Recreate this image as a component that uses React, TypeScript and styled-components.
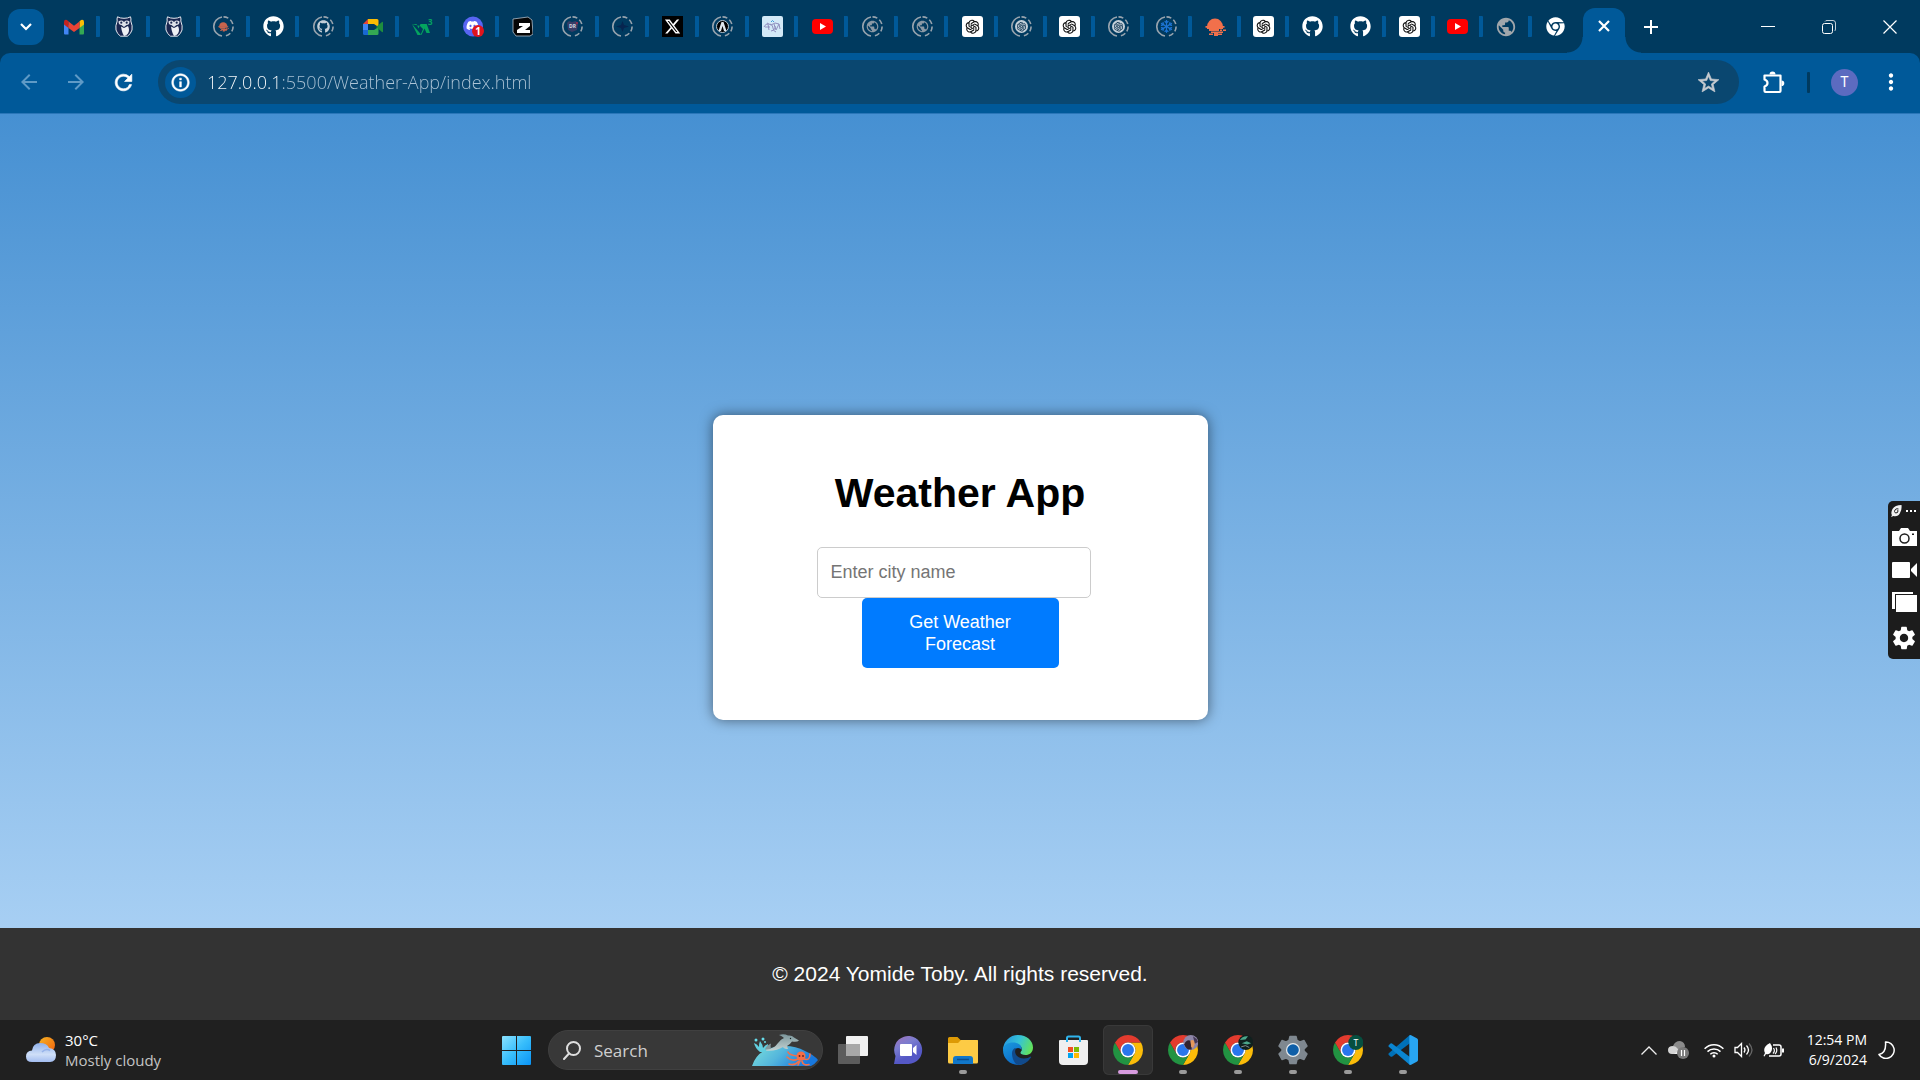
import React from "react";
import styled, { createGlobalStyle, css } from "styled-components";
import {
  MdArrowBack,
  MdArrowForward,
  MdRefresh,
  MdInfoOutline,
  MdStarBorder,
  MdPublic,
  MdSettings,
  MdMoreVert,
} from "react-icons/md";
import { FaGithub, FaChrome, FaDiscord, FaRegSnowflake } from "react-icons/fa";
import { FaXTwitter } from "react-icons/fa6";
import { AiOutlineOpenAI } from "react-icons/ai";

const systemFont = `"Open Sans", "Noto Sans", sans-serif`;
const pageFont = `"Liberation Sans", Arial, sans-serif`;
const frame = "#003a5f";
const accent = "#005999";

const GlobalStyle = createGlobalStyle`
  *, *::before, *::after { box-sizing: border-box; }
  body { margin: 0; font-family: ${systemFont}; background: #202020; }
  button { border: 0; padding: 0; background: none; font: inherit; color: inherit; cursor: pointer; }
  svg { display: block; flex: none; }
`;

const Screen = styled.div`
  display: flex;
  flex-direction: column;
  min-height: 100vh;
  overflow: hidden;
`;

/* ---------- Tab strip ---------- */

const TabStrip = styled.header`
  display: flex;
  align-items: center;
  height: 53px;
  padding-left: 8px;
  background: ${frame};
  color: #fff;
`;

const TabSearch = styled.button`
  display: grid;
  place-items: center;
  width: 36px;
  height: 36px;
  margin-right: 6px;
  border-radius: 12px;
  background: ${accent};
`;

const TabGroup = styled.nav<{ $count: number; $width: number }>`
  display: grid;
  grid-template-columns: repeat(${(p) => p.$count}, 1fr);
  flex: 0 1 ${(p) => p.$width}px;
`;

const Tab = styled.button<{ $divided: boolean }>`
  display: grid;
  place-items: center;
  height: 21px;
  ${(p) =>
    p.$divided &&
    css`
      border-right: 4px solid ${accent};
      border-radius: 0 1px 1px 0;
      padding-left: 2px;
    `}
`;

const ActiveTab = styled.div`
  display: grid;
  place-items: center;
  position: relative;
  align-self: flex-end;
  width: 42px;
  height: 45px;
  margin-left: 3px;
  padding-bottom: 9px;
  border-radius: 12px 12px 0 0;
  background: ${accent};
  &::before,
  &::after {
    content: "";
    position: absolute;
    bottom: 0;
    width: 16px;
    height: 16px;
  }
  &::before {
    right: 100%;
    background: radial-gradient(circle at 0 0, transparent 15px, ${accent} 16px);
  }
  &::after {
    left: 100%;
    background: radial-gradient(circle at 100% 0, transparent 15px, ${accent} 16px);
  }
`;

const NewTab = styled.button`
  margin-left: 16px;
  padding: 3px;
`;

const WindowControls = styled.div`
  display: flex;
  margin-left: auto;
`;

const WindowButton = styled.button`
  display: grid;
  place-items: center;
  width: 61px;
  height: 53px;
`;

/* ---------- Toolbar ---------- */

const ToolbarBack = styled.div`
  background: ${frame};
`;

const Toolbar = styled.div`
  display: flex;
  align-items: center;
  height: 61px;
  padding: 0 16px 2px 17px;
  border-bottom: 1px solid #2a76b8;
  border-radius: 10px 10px 0 0;
  background: ${accent};
  color: #fff;
`;

const boldGlyph = css`
  path:not([fill="none"]) {
    stroke: currentColor;
    stroke-width: 0.6px;
  }
`;

const ToolButton = styled.button<{ $dim?: boolean }>`
  display: grid;
  place-items: center;
  width: 24px;
  height: 24px;
  margin-right: 23px;
  color: ${(p) => (p.$dim ? "#5f9ac6" : "#fff")};
  ${(p) => !p.$dim && boldGlyph}
`;

const AddressBar = styled.form`
  display: flex;
  align-items: center;
  flex: 1;
  height: 44px;
  padding: 0 18px 0 7px;
  border-radius: 22px;
  background: #0a4770;
`;

const SiteInfo = styled.button`
  display: grid;
  place-items: center;
  width: 31px;
  height: 31px;
  border-radius: 50%;
  background: ${accent};
  ${boldGlyph}
`;

const AddressInput = styled.input`
  flex: 1;
  min-width: 0;
  height: 30px;
  margin: 0 11px;
  padding: 0;
  border: 0;
  outline: 0;
  font: 300 18px/30px ${systemFont};
  color: transparent;
  background: linear-gradient(90deg, #fff 73px, #adc4d6 73px);
  background-clip: text;
  -webkit-background-clip: text;
`;

const Star = styled.button`
  color: #c7cbd0;
  ${boldGlyph}
`;

const ToolbarEnd = styled.div`
  display: flex;
  align-items: center;
  margin-left: 24px;
`;

const Divider = styled.span`
  width: 3px;
  height: 21px;
  margin: 0 21px 0 22px;
  border-radius: 1px;
  background: ${frame};
`;

const Avatar = styled.button`
  width: 27px;
  height: 27px;
  margin-right: 20px;
  border-radius: 50%;
  background: #5c6bc0;
  font: 400 14px/27px Roboto, sans-serif;
  text-align: center;
`;

/* ---------- Page ---------- */

const Page = styled.div`
  display: grid;
  flex: 1;
  background: linear-gradient(to bottom, #4690d2, #b2d6f7);
  font-family: ${pageFont};
`;

const Main = styled.main`
  grid-area: 1 / 1;
  place-self: center;
  width: 495px;
  height: 305px;
  padding: 54px 90px 0;
  border-radius: 10px;
  background: #fff;
  box-shadow: 0 0 13px rgba(0, 0, 0, 0.5);
`;

const Title = styled.h1`
  margin: 0 0 29px;
  font-size: 41px;
  line-height: 49px;
  text-align: center;
  color: #000;
`;

const ForecastForm = styled.form`
  display: flex;
  flex-direction: column;
  align-items: center;
`;

const CityInput = styled.input`
  width: 274px;
  height: 51px;
  margin-right: 13px;
  padding: 0 13px;
  border: 1px solid #ccc;
  border-radius: 5px;
  font: 18px ${pageFont};
  &::placeholder {
    color: #757575;
  }
`;

const SubmitButton = styled.button`
  width: 197px;
  height: 70px;
  padding: 0 44px;
  border-radius: 5px;
  background: #007bff;
  color: #fff;
  font: 18px/22px ${pageFont};
`;

const Footer = styled.footer`
  grid-area: 1 / 1;
  align-self: end;
  z-index: 1;
  padding: 34px 20px;
  background: #333;
  color: #fff;
  font-size: 21px;
  line-height: 24px;
  text-align: center;
`;

/* ---------- Capture widget ---------- */

const CaptureBar = styled.aside`
  position: fixed;
  top: 501px;
  right: 0;
  z-index: 2;
  display: flex;
  flex-direction: column;
  align-items: center;
  gap: 12px;
  width: 32px;
  height: 158px;
  padding: 4px 0;
  border-radius: 5px 0 0 5px;
  background: #1c1c1c;
  color: #fff;
`;

const CaptureHead = styled.div`
  display: flex;
  align-items: center;
  gap: 4px;
  height: 11px;
`;

/* ---------- Taskbar ---------- */

const Taskbar = styled.footer`
  display: grid;
  grid-template-columns: 1fr auto 1fr;
  align-items: center;
  height: 60px;
  background: #202020;
  color: #fff;
`;

const Weather = styled.button`
  display: flex;
  align-items: center;
  justify-self: start;
  gap: 9px;
  padding-left: 26px;
  text-align: left;
`;

const Lines = styled.span<{ $size: number }>`
  display: flex;
  flex-direction: column;
  font-size: ${(p) => p.$size}px;
  line-height: 20px;
`;

const Muted = styled.span`
  color: #c4c4c4;
`;

const Apps = styled.nav`
  display: flex;
  align-items: center;
`;

const AppButton = styled.button<{ $active?: boolean; $running?: boolean }>`
  display: grid;
  place-items: center;
  position: relative;
  width: 50px;
  height: 50px;
  margin: 0 2px 0 3px;
  border-radius: 6px;
  ${(p) =>
    p.$active &&
    css`
      background: #2f2f2f;
      box-shadow: inset 0 0 0 1px #393939;
    `}
  ${(p) =>
    p.$running &&
    css`
      &::after {
        content: "";
        position: absolute;
        bottom: 1px;
        left: calc(50% - ${p.$active ? 10 : 4}px);
        width: ${p.$active ? 20 : 8}px;
        height: 4px;
        border-radius: 2px;
        background: ${p.$active ? "#d89ce0" : "#9a9a9a"};
      }
    `}
`;

const StartButton = styled(AppButton)`
  margin: 0 4px 0 1px;
`;

const SearchBox = styled.label`
  display: flex;
  align-items: center;
  width: 275px;
  height: 40px;
  margin: 0 2px 0 3px;
  padding: 0 4px 0 14px;
  border: 1px solid #404040;
  border-radius: 20px;
  background: #383838;
`;

const SearchInput = styled.input`
  flex: 1;
  min-width: 0;
  padding: 0 0 0 13px;
  border: 0;
  outline: 0;
  background: none;
  color: #fff;
  font: 17px ${systemFont};
  &::placeholder {
    color: #cfcfcf;
  }
`;

const Tray = styled.div`
  display: flex;
  align-items: center;
  justify-self: end;
  padding-right: 25px;
`;

const TrayButton = styled.button<{ $gap?: number }>`
  display: grid;
  place-items: center;
  width: 30px;
  height: 40px;
  margin-right: ${(p) => p.$gap ?? 0}px;
`;

const Clock = styled.button`
  margin: 0 11px 0 18px;
  text-align: right;
`;

/* ---------- Favicons ---------- */

const Gmail = () => (
  <svg width="20" height="20" viewBox="0 0 20 20">
    <path d="M0 5v11.500q0 1 1 1h3.500V8z" fill="#4285f4" />
    <path d="M20 5v11.500q0 1-1 1h-3.500V8z" fill="#34a853" />
    <path d="M15.500 4.500 17 3q3-1 3 2v2.500l-4.500 3.500z" fill="#fbbc04" />
    <path d="M4.500 4.500 3 3Q0 2 0 5v2.500L4.500 11z" fill="#c5221f" />
    <path d="M4.500 4.500 10 8.700l5.500-4.200V11L10 15l-5.500-4z" fill="#ea4335" />
  </svg>
);

const Owl = () => (
  <svg width="18" height="21" viewBox="0 0 18 21">
    <path
      d="M2.500.8Q5 2.300 9 2.300T15.500.8Q16.300 3 15.800 5q2 5 1.200 9-1.200 4-4.500 6.200h-7Q2.200 18 1 14 .2 10 2.200 5 1.700 3 2.500.8z"
      fill="#1a2750"
      stroke="#e6e9f0"
      strokeWidth="1"
    />
    <path d="M3.500 5.500Q6.500 3.500 9 6q2.500-2.500 5.500-.5Q14.500 9 11.500 9L9 11 6.500 9Q3.500 9 3.500 5.500z" fill="#dfe3ea" />
    <path d="M6 10.500l3 1.500 4-2q2 4 0 7.500-1.500 2-4 2.500-2-3-3-9.500z" fill="#eef0f4" />
    <circle cx="6.300" cy="6.700" r="1.100" fill="#1a2750" />
    <circle cx="11.700" cy="6.700" r="1.100" fill="#1a2750" />
  </svg>
);

const Ring = ({ children }: { children?: React.ReactNode }) => (
  <svg width="21" height="21" viewBox="0 0 21 21" color="#c3cfd8">
    <g fill="none" stroke="#98a4ae" strokeWidth="1.600">
      <path d="M9 1A9.600 9.600 0 0 0 9 20" />
      <path d="M10.500 .9A9.600 9.600 0 1 1 10.500 20.100" strokeDasharray="5 2.500" />
    </g>
    {children}
  </svg>
);

const Sunset = ({ x = 0, y = 0, size = 21, color = "#f1704b" }) => (
  <svg x={x} y={y} width={size} height={size} viewBox="0 0 21 21" fill={color}>
    <path d="M2 11a8 8.500 0 1 1 16 0z" />
    <path d="M.5 10h19v1.800H.5zM2 11h16v2H2zM4 13h10v2H4zM15 13.500h2V15h-2zM18 13.500h3V15h-3zM6 15.500h12V17H6zM4 17.500h4V19H4zM9 17h4v3H9zM13 17.500h4V19h-4z" />
  </svg>
);

const Meet = () => (
  <svg width="20" height="18" viewBox="0 0 20 18">
    <path d="M5 1h9q1.500 0 1.500 1.500V9L11 6H5z" fill="#fbbc04" />
    <path d="M5 1v5H0z" fill="#ea4335" />
    <path d="M0 6h5v6H0z" fill="#4285f4" />
    <path d="M0 12h5v5H1.500Q0 17 0 15.500z" fill="#1967d2" />
    <path d="M5 12h6l4.500-3v6.500q0 1.500-1.500 1.500H5z" fill="#34a853" />
    <path d="M13 9l6-5q1-.5 1 .5v9q0 1-1 .5z" fill="#1e8e3e" />
    <path d="M5 6h6v6H5z" fill="#003a5f" />
  </svg>
);

const W3 = () => (
  <svg width="24" height="20" viewBox="0 0 24 20">
    <path d="M1 7h4.500l2 4.500L9.500 7h6.200l3.300 9h-3.500l-2-4.500L10.500 18z M1 7l5.500 11h3L12 12 9 9z" fill="#04a45f" />
    <text x="17" y="8" fontSize="8" fontWeight="700" fill="#04a45f">3</text>
  </svg>
);

const Discord = () => (
  <svg width="21" height="21" viewBox="0 0 21 21">
    <circle cx="10" cy="10.500" r="10" fill="#5865f2" />
    <FaDiscord x="3" y="3" size={13} color="#fff" />
    <circle cx="15" cy="15" r="6" fill="#e0141c" />
    <text x="15" y="18.500" fontSize="10" fontWeight="700" textAnchor="middle" fill="#fff">1</text>
  </svg>
);

const Zed = () => (
  <svg width="21" height="21" viewBox="0 0 21 21">
    <path d="M1 3 16 1l4 3 1 14-3 2H4L1 16z" fill="#050505" stroke="#aebdc9" strokeWidth=".8" />
    <path d="M7 7h11v3l-5 4h5v3H5v-3l6-4H7z" fill="#fff" />
  </svg>
);

const XLogo = () => (
  <svg width="21" height="21" viewBox="0 0 21 21">
    <rect width="21" height="21" fill="#000" />
    <FaXTwitter x="2" y="2" size={17} color="#fff" />
  </svg>
);

const Peak = () => (
  <Ring>
    <circle cx="10.500" cy="10.500" r="6" fill="#000" stroke="#b9c6d1" />
    <path d="M6.500 15 9.500 6h2l3 9h-2.500l-1.500-5-1.500 5z" fill="#dfe6ec" />
  </Ring>
);

const Sketch = () => (
  <svg width="21" height="21" viewBox="0 0 21 21">
    <rect width="21" height="21" rx="2" fill="#d3e9f7" />
    <g fill="none" stroke="#8f8dbd" strokeWidth="1">
      <path d="M2 11q2-4 4-3l1 6M3 11h5M8 8q3 1 3 4t3 4M9 15q5-1 4-5M12 8l2 6 3-6 1 5M5 7l4 2 4-2 4 1" />
      <path d="M9 6q1.500-3 3 0" stroke="#3e9ad8" />
    </g>
  </svg>
);

const YouTube = () => (
  <svg width="21" height="15" viewBox="0 0 21 15">
    <rect width="21" height="15" rx="4" fill="#f00" />
    <path d="M8 4l6 3.500L8 11z" fill="#fff" />
  </svg>
);

const OpenAi = () => (
  <svg width="21" height="21" viewBox="0 0 21 21">
    <rect width="21" height="21" rx="3" fill="#fff" />
    <AiOutlineOpenAI x="1.500" y="1.500" size={18} color="#111" />
  </svg>
);

const RingOpenAi = () => (
  <Ring>
    <circle cx="10.500" cy="10.500" r="6.500" fill="#c3cfd8" />
    <AiOutlineOpenAI x="4.500" y="4.500" size={12} color="#0c3350" />
  </Ring>
);

const RingGlobe = () => (
  <Ring>
    <MdPublic x="3.500" y="3.500" size={14} color="#8b99a5" />
  </Ring>
);

const GitHub = () => <FaGithub size={21} color="#fff" />;

const firstTabs: [string, React.ReactNode][] = [
  ["Gmail", <Gmail />],
  ["Owl", <Owl />],
  ["Owl docs", <Owl />],
  ["Sunset", <Ring><Sunset x={5} y={5} size={11} color="#c8644d" /></Ring>],
  ["GitHub", <GitHub />],
  ["GitHub repository", <Ring><FaGithub x="4" y="4" size={13} /></Ring>],
  ["Meet", <Meet />],
  ["W3Schools", <W3 />],
  ["Discord", <Discord />],
  ["Z", <Zed />],
  ["DR", (
    <Ring>
      <path d="M5 7l2-2 3 1 4-1 2 3-1 6-5 2-4-2z" fill="#383d66" />
      <text x="10.500" y="12" fontSize="5" fontWeight="700" textAnchor="middle" fill="#d5dbe2">DR</text>
      <circle cx="15" cy="7" r="1" fill="#a7284c" />
    </Ring>
  )],
  ["Star", <Ring><path d="M10.500 5l1.500 4 5 1.500-5 1.500-1.500 4L9 12l-5-1.500L9 9z" fill="#06254f" /></Ring>],
  ["X", <XLogo />],
  ["Peak", <Peak />],
  ["Sketch", <Sketch />],
  ["YouTube", <YouTube />],
  ["Site", <RingGlobe />],
  ["Another site", <RingGlobe />],
  ["ChatGPT", <OpenAi />],
];

const secondTabs: [string, React.ReactNode][] = [
  ["ChatGPT, asleep", <RingOpenAi />],
  ["ChatGPT", <OpenAi />],
  ["ChatGPT, asleep", <RingOpenAi />],
  ["Snowflake", <Ring><FaRegSnowflake x="4" y="4" size={13} color="#1c74d4" /></Ring>],
  ["Sunset", <Sunset />],
  ["ChatGPT", <OpenAi />],
  ["GitHub", <GitHub />],
  ["GitHub", <GitHub />],
  ["ChatGPT", <OpenAi />],
  ["YouTube", <YouTube />],
  ["Site", <MdPublic size={22} color="#a0a6ab" />],
  ["Chrome", <FaChrome size={19} color="#fff" />],
];

/* ---------- Taskbar icons ---------- */

const WeatherIcon = () => (
  <svg width="30" height="26" viewBox="0 0 30 26">
    <defs>
      <linearGradient id="sun" x1="0" y1="0" x2="1" y2="1">
        <stop stopColor="#f5b324" />
        <stop offset="1" stopColor="#f2600c" />
      </linearGradient>
      <linearGradient id="cloud" x1="0" y1="0" x2="0" y2="1">
        <stop stopColor="#8fb0ea" />
        <stop offset=".6" stopColor="#cfdff8" />
        <stop offset="1" stopColor="#a3bdf0" />
      </linearGradient>
    </defs>
    <circle cx="21" cy="8" r="8" fill="url(#sun)" />
    <path d="M6 25q-6 0-6-5.500T6 13.500Q7 6 14 6t9 5q7 1 7 7 0 7-6 7z" fill="url(#cloud)" />
    <path d="M16 15q4-4 8-1.500" fill="none" stroke="#7d9fe2" strokeWidth="1.500" opacity=".6" />
  </svg>
);

const WindowsIcon = () => (
  <svg width="29" height="29" viewBox="0 0 29 29">
    <defs>
      <linearGradient id="win" x1="0" y1="0" x2="1" y2="1">
        <stop stopColor="#8be2ff" />
        <stop offset=".5" stopColor="#37bdfb" />
        <stop offset="1" stopColor="#0a93f5" />
      </linearGradient>
    </defs>
    <path d="M1 0h13v14H0V1q0-1 1-1zM15 0h13q1 0 1 1v13H15zM0 15h14v14H1q-1 0-1-1zM15 15h14v13q0 1-1 1H15z" fill="url(#win)" />
  </svg>
);

const SearchIcon = () => (
  <svg width="18" height="19" viewBox="0 0 18 19" fill="none" stroke="#dedede" strokeWidth="2">
    <circle cx="10.500" cy="7.500" r="6.500" />
    <path d="M6 12.500 1 18" strokeLinecap="round" />
  </svg>
);

const DolphinArt = () => (
  <svg width="66" height="32" viewBox="0 0 66 32">
    <defs>
      <linearGradient id="sea" x1="0" y1="0" x2="1" y2=".3">
        <stop stopColor="#7be0dc" />
        <stop offset=".5" stopColor="#54b6dc" />
        <stop offset="1" stopColor="#1878de" />
      </linearGradient>
      <linearGradient id="fin" x1="0" y1="0" x2="0" y2="1">
        <stop stopColor="#7b969b" />
        <stop offset="1" stopColor="#c3d2d2" />
      </linearGradient>
    </defs>
    <path d="M0 32Q5 16 23 13q17-3 30 4 9 4 13 9-3 4-7 6z" fill="url(#sea)" />
    <path d="M8 18Q3 14 2 9q3 1 5 4 0-4 1-6 3 4 3 7 2-3 5-4 0 5-3 8z" fill="#62cfe0" />
    <g fill="#67dcea">
      <circle cx="4" cy="6" r="1.500" />
      <circle cx="11" cy="5" r="1.500" />
      <circle cx="13" cy="8" r="1" />
    </g>
    <path d="M14 15.500Q22 15 26 9q3-4 6-5-2-2-5-3 5-1.500 9 .5 4-.5 6 2l5 3q-2 2-7 1-2 3-5 4.500l1 3q-4 0-5-2-7 4.500-17 3.500z" fill="url(#fin)" />
    <path d="M13 15.500q1-4 6-6-1 3 0 5.500z" fill="#84989c" />
    <circle cx="38.500" cy="4.500" r=".7" fill="#152226" />
    <circle cx="49" cy="22" r="4.500" fill="#f66f46" />
    <path
      d="M46 25q-6 3-11-2M47 27q-4 5-10 3M50 27q1 5 7 3.500M52 25q6 2 6-5M45 22q-8-1-9-4M48 27l-2 4"
      fill="none"
      stroke="#f2704c"
      strokeWidth="1.600"
      strokeLinecap="round"
    />
    <circle cx="47.500" cy="22" r=".9" fill="#63201d" />
    <circle cx="51" cy="22" r=".9" fill="#63201d" />
  </svg>
);

const TaskViewIcon = () => (
  <svg width="30" height="28" viewBox="0 0 30 28">
    <rect x="8" y="0" width="22" height="20" rx="1" fill="#f1f1f1" />
    <rect x="0" y="8" width="22" height="20" rx="1" fill="#5c5c5c" />
    <path d="M8 8h14v12H8z" fill="#a8a8a8" />
  </svg>
);

const ChatIcon = () => (
  <svg width="29" height="28" viewBox="0 0 29 28">
    <defs>
      <linearGradient id="chat" x1="0" y1="0" x2=".5" y2="1">
        <stop stopColor="#a273bb" />
        <stop offset=".4" stopColor="#7a7ccf" />
        <stop offset=".8" stopColor="#5558c6" />
      </linearGradient>
    </defs>
    <path d="M0 28 1.500 20A14 14 0 1 1 14.500 28z" fill="url(#chat)" />
    <rect x="6" y="8" width="12" height="12" rx="1" fill="#fff" />
    <path d="M19 12l3.500-3v10L19 16z" fill="#fff" />
  </svg>
);

const FolderIcon = () => (
  <svg width="30" height="27" viewBox="0 0 30 27">
    <path d="M0 1.500Q0 0 1.500 0h8l3 3H29q1 0 1 1v6H0z" fill="#dd9a05" />
    <path d="M0 6h10l3-3h16q1 0 1 1v21q0 1.500-1.500 1.500h-27Q0 26.500 0 25z" fill="#fdcb45" />
    <path d="M5 27v-5q0-3 3-3h14q3 0 3 3v5z" fill="#1177c9" />
    <path d="M9 22.500h12" stroke="#0a4d8d" strokeWidth="1.500" />
  </svg>
);

const EdgeIcon = () => (
  <svg width="30" height="30" viewBox="0 0 30 30">
    <defs>
      <linearGradient id="edgeTop" x1="0" y1=".3" x2="1" y2=".6">
        <stop stopColor="#2597e0" />
        <stop offset=".5" stopColor="#36c3d6" />
        <stop offset="1" stopColor="#64e356" />
      </linearGradient>
      <linearGradient id="edgeBody" x1="0" y1="0" x2=".6" y2="1">
        <stop stopColor="#1a9ade" />
        <stop offset="1" stopColor="#0b67c6" />
      </linearGradient>
    </defs>
    <path d="M0 15A15 15 0 0 1 15 0c9 0 15 6 15 12.500 0 5-3.500 7.500-7.500 7.500-4 0-6-1.500-4.500-3.500 2.500-3-.5-7-5-7C6.500 9.500 1.500 12 0 15z" fill="url(#edgeTop)" />
    <path d="M0 15C0 10 5 7.500 10 7.500c6 0 9.500 4 8.500 7.500-1-2-4-3-6-1-5 5 0 14 9 14-2 1.500-4 2-6.500 2A15 15 0 0 1 0 15z" fill="url(#edgeBody)" />
    <path d="M9 18c0-3 2-5 4-5-3 6 2 10.500 8 10.500 3 0 5-1 6.500-2q1 0 .5 1-5 7.500-13 7.500C11 28.500 9 23 9 18z" fill="#114a8b" />
  </svg>
);

const StoreIcon = () => (
  <svg width="29" height="30" viewBox="0 0 29 30">
    <path d="M8 7V3q0-1.500 1.500-1.500h10Q21 1.500 21 3v4" fill="none" stroke="#2fb4ec" strokeWidth="2" />
    <path d="M0 6q0-1 1-1h27q1 0 1 1v20q0 4-4 4H4q-4 0-4-4z" fill="#efefef" />
    <path d="M9 12h5v5H9z" fill="#f25022" />
    <path d="M15 12h5v5h-5z" fill="#7fba00" />
    <path d="M9 18h5v5H9z" fill="#00a4ef" />
    <path d="M15 18h5v5h-5z" fill="#ffb900" />
    <path d="M8 5v2M21 5v2" stroke="#2fb4ec" strokeWidth="2" />
  </svg>
);

const ChromeIcon = ({ children }: { children?: React.ReactNode }) => (
  <svg width="30" height="30" viewBox="0 0 48 48">
    <path d="M24 12H44.780A24 24 0 0 1 24 48L34.390 30A12 12 0 0 0 24 12Z" fill="#fbbc09" />
    <path d="M34.390 30 24 48A24 24 0 0 1 3.220 12L13.610 30A12 12 0 0 0 34.390 30Z" fill="#229342" />
    <path d="M13.610 30 3.220 12A24 24 0 0 1 44.780 12H24A12 12 0 0 0 13.610 30Z" fill="#e33b2e" />
    <circle cx="24" cy="24" r="12" fill="#fff" />
    <circle cx="24" cy="24" r="9.500" fill="#2a76ec" />
    {children}
  </svg>
);

const SunsetProfile = () => (
  <g>
    <circle cx="36.500" cy="12" r="12" fill="#8e86a8" />
    <path d="M26 15q4-9 10-6l2 14q-8 2-12-8z" fill="#31232e" />
    <path d="M36 9q6-3 7 5l-3 7-3-3z" fill="#e5985b" />
    <path d="M40 2q6 3 8 9l-5 3z" fill="#443755" />
  </g>
);

const NightProfile = () => (
  <g>
    <circle cx="36.500" cy="12" r="12" fill="#10201e" />
    <path d="M27 8q4-7 13-6l-4 5zM30 13l8-3 7 3-6 2z" fill="#4ca78b" />
    <path d="M29 19l7-2 6 3" stroke="#8a8f90" strokeWidth="1.500" fill="none" />
  </g>
);

const LetterProfile = () => (
  <g>
    <circle cx="36.500" cy="12" r="12" fill="#054f40" />
    <text x="36.500" y="17" fontSize="14" textAnchor="middle" fill="#fff">T</text>
  </g>
);

const GearIcon = () => (
  <svg width="30" height="30" viewBox="0 0 30 30">
    <path
      d="M12 1.500h6l1 4 3 1.500 4-1.500 3 5.500-3 3v2l3 3-3 5.500-4-1.500-3 1.500-1 4h-6l-1-4L8 23l-4 1.500L1 19l3-3v-2l-3-3 3-5.500L8 7l3-1.500z"
      fill="#7f8890"
      stroke="#7f8890"
      strokeWidth="1.500"
      strokeLinejoin="round"
    />
    <circle cx="15" cy="15" r="7" fill="#e9edf0" />
    <circle cx="15" cy="15" r="5.800" fill="#0f5fa8" />
  </svg>
);

const CodeIcon = () => (
  <svg width="30" height="30" viewBox="0 0 24 24">
    <path d="M17.500 6.500 3.200 17.300q-.6.300-1.200-.1L.6 15.900q-.6-.7 0-1.300L17.500 0z" fill="#0071b8" />
    <path d="M17.500 17.500 3.200 6.700q-.6-.3-1.200.1L.6 8.100q-.6.700 0 1.300L17.500 24z" fill="#0a85d1" />
    <path d="M17 .6q.5-.8 1.500-.4L23 2.600q1 .5 1 1.400v16q0 .9-1 1.400l-4.500 2.400q-1 .4-1.500-.4z" fill="#28a5f2" />
  </svg>
);

const apps: { name: string; icon: React.ReactNode; active?: boolean; running?: boolean }[] = [
  { name: "Task view", icon: <TaskViewIcon /> },
  { name: "Chat", icon: <ChatIcon /> },
  { name: "File Explorer", icon: <FolderIcon />, running: true },
  { name: "Edge", icon: <EdgeIcon /> },
  { name: "Store", icon: <StoreIcon /> },
  { name: "Chrome", icon: <ChromeIcon />, active: true, running: true },
  { name: "Chrome, second profile", icon: <ChromeIcon><SunsetProfile /></ChromeIcon>, running: true },
  { name: "Chrome, third profile", icon: <ChromeIcon><NightProfile /></ChromeIcon>, running: true },
  { name: "Settings", icon: <GearIcon />, running: true },
  { name: "Chrome, T profile", icon: <ChromeIcon><LetterProfile /></ChromeIcon>, running: true },
  { name: "Code", icon: <CodeIcon />, running: true },
];

function Tabs({ items, width, last }: { items: [string, React.ReactNode][]; width: number; last?: boolean }) {
  return (
    <TabGroup $count={items.length} $width={width} aria-label="Tabs">
      {items.map(([name, icon], i) => (
        <Tab key={i} aria-label={name} $divided={!(last && i === items.length - 1)}>
          {icon}
        </Tab>
      ))}
    </TabGroup>
  );
}

function BrowserChrome() {
  return (
    <>
      <TabStrip>
        <TabSearch aria-label="Search tabs">
          <svg width="12" height="8" viewBox="0 0 12 8" fill="none" stroke="#fff" strokeWidth="2.200">
            <path d="M1 1l5 5 5-5" />
          </svg>
        </TabSearch>
        <Tabs items={firstTabs} width={948} />
        <Tabs items={secondTabs} width={582} last />
        <ActiveTab>
          <button aria-label="Close tab">
            <svg width="12" height="12" viewBox="0 0 12 12" stroke="#fff" strokeWidth="2.200">
              <path d="M1 1l10 10M11 1 1 11" />
            </svg>
          </button>
        </ActiveTab>
        <NewTab aria-label="New tab">
          <svg width="14" height="14" viewBox="0 0 14 14" stroke="#fff" strokeWidth="2">
            <path d="M7 0v14M0 7h14" />
          </svg>
        </NewTab>
        <WindowControls>
          <WindowButton aria-label="Minimize">
            <svg width="14" height="14" viewBox="0 0 14 14" stroke="#fff">
              <path d="M0 6.500h14" />
            </svg>
          </WindowButton>
          <WindowButton aria-label="Restore">
            <svg width="14" height="14" viewBox="0 0 14 14" fill="none" stroke="#fff">
              <rect x=".5" y="3.500" width="10" height="10" rx="2" />
              <path d="M3 1.500Q3.500.5 5 .5h6q2.500 0 2.500 2.500v6q0 1.500-1 2" opacity=".75" />
            </svg>
          </WindowButton>
          <WindowButton aria-label="Close">
            <svg width="14" height="14" viewBox="0 0 14 14" stroke="#fff" strokeWidth="1.200">
              <path d="M.5.5l13 13M13.500.5l-13 13" />
            </svg>
          </WindowButton>
        </WindowControls>
      </TabStrip>
      <ToolbarBack>
        <Toolbar>
          <ToolButton $dim aria-label="Back"><MdArrowBack size={24} /></ToolButton>
          <ToolButton $dim aria-label="Forward"><MdArrowForward size={24} /></ToolButton>
          <ToolButton aria-label="Reload"><MdRefresh size={25} /></ToolButton>
          <AddressBar onSubmit={(e) => e.preventDefault()}>
            <SiteInfo type="button" aria-label="Site information"><MdInfoOutline size={21} /></SiteInfo>
            <AddressInput aria-label="Address" defaultValue="127.0.0.1:5500/Weather-App/index.html" />
            <Star type="button" aria-label="Bookmark"><MdStarBorder size={25} /></Star>
          </AddressBar>
          <ToolbarEnd>
            <button aria-label="Extensions">
              <svg width="22" height="24" viewBox="0 0 22 24">
                <path
                  d="M1.500 5.500h16v15.500q0 1-1 1h-14q-1 0-1-1v-4.500q3-1 3-3.500t-3-3.500z"
                  fill="none"
                  stroke="#fff"
                  strokeWidth="2.200"
                  strokeLinejoin="round"
                />
                <path d="M6.500 4.500a3 3 0 0 1 6 0zM18.500 10.500a2.800 2.800 0 0 1 0 5.600z" fill="#fff" />
              </svg>
            </button>
            <Divider />
            <Avatar>T</Avatar>
            <button aria-label="Menu"><MdMoreVert size={26} /></button>
          </ToolbarEnd>
        </Toolbar>
      </ToolbarBack>
    </>
  );
}

function CaptureWidget() {
  return (
    <CaptureBar aria-label="Screen capture">
      <CaptureHead>
        <svg width="11" height="12" viewBox="0 0 11 12">
          <path d="M10.500 0Q4 0 1.500 4-.5 8 1 10l-1 2 2.500-1Q7 12 9 8q2-3 1.500-8z" fill="#f2f2f2" />
          <path d="M7.500 4Q4 3 3.500 6.500 4 9 6.500 7.500q1-2 0-2.500" fill="none" stroke="#1c1c1c" />
        </svg>
        <svg width="11" height="12" viewBox="0 0 11 12" fill="#fff">
          <path d="M0 5h2v2H0zM4 5h2v2H4zM8 5h2v2H8z" />
        </svg>
      </CaptureHead>
      <button aria-label="Take screenshot">
        <svg width="25" height="18" viewBox="0 0 25 18">
          <path d="M0 3h7l2-3h7l2 3h7v15H0z" fill="#fff" />
          <circle cx="12.500" cy="10.500" r="4.500" fill="#fff" stroke="#1c1c1c" strokeWidth="1.500" />
          <path d="M20 5.500h2V7h-2z" fill="#1c1c1c" />
        </svg>
      </button>
      <button aria-label="Record video">
        <svg width="25" height="22" viewBox="0 0 25 22" fill="#fff">
          <rect y="4" width="18" height="16" rx="1" />
          <path d="M19 11l6-6v14l-6-6z" />
        </svg>
      </button>
      <button aria-label="Gallery">
        <svg width="25" height="20" viewBox="0 0 25 20">
          <path d="M0 0h21v17H0z" fill="#fff" />
          <rect x="3.500" y="2.500" width="22" height="18" fill="#fff" stroke="#1c1c1c" />
        </svg>
      </button>
      <button aria-label="Capture settings"><MdSettings size={28} /></button>
    </CaptureBar>
  );
}

function SystemTray() {
  return (
    <Tray>
      <TrayButton aria-label="Show hidden icons">
        <svg width="16" height="9" viewBox="0 0 16 9" fill="none" stroke="#eee" strokeWidth="1.300">
          <path d="M.5 8.500 8 1l7.500 7.500" />
        </svg>
      </TrayButton>
      <TrayButton aria-label="OneDrive" $gap={5}>
        <svg width="21" height="18" viewBox="0 0 21 18">
          <path d="M5 5q2-5 7-5 5 1 5 6l-9 4z" fill="#8b8b8b" />
          <path d="M4 13q-4 0-4-4t5-4q3 0 5 3l4 5z" fill="#d4d4d4" />
          <path d="M6 13l8-6 5 1v5z" fill="#efefef" />
          <circle cx="15" cy="12" r="6" fill="#7a7a7a" />
          <path d="M13.500 9v6M16.500 9v6" stroke="#fff" strokeWidth="1.200" />
        </svg>
      </TrayButton>
      <TrayButton aria-label="Network">
        <svg width="20" height="15" viewBox="0 0 20 15" fill="none" stroke="#fff" strokeWidth="1.500">
          <path d="M.6 5.800a13 13 0 0 1 18.800 0M3.500 8.600a9.200 9.200 0 0 1 13 0M6.300 11.200a5.300 5.300 0 0 1 7.400 0" />
          <circle cx="10" cy="13" r="1.500" fill="#fff" stroke="none" />
        </svg>
      </TrayButton>
      <TrayButton aria-label="Volume">
        <svg width="20" height="16" viewBox="0 0 20 16" fill="none" stroke="#fff" strokeWidth="1.300">
          <path d="M1 5.500h2.500L7.500 1.500v13l-4-4H1z" />
          <path d="M10 5.500q2 2.500 0 5M12.500 3.500q4 4.500 0 9" />
          <path d="M15 1.500q6 6.500 0 13" stroke="#666" />
        </svg>
      </TrayButton>
      <TrayButton aria-label="Battery">
        <svg width="21" height="15" viewBox="0 0 21 15">
          <path d="M10 2h6q2 0 2 2v7q0 2-2 2H6" fill="none" stroke="#fff" strokeWidth="1.500" />
          <path d="M19 5.500h2v4h-2z" fill="#fff" />
          <path d="M7 0q3.500 4.500 1 9-2 3-5 2l-1.500 2.500-1-.5L2 10Q-1 4 7 0z" fill="#fff" />
          <path d="M10 10.500q2.500-2.500.5-5.500M12 11q3-3 1-6.500" fill="none" stroke="#fff" strokeWidth="1.200" />
        </svg>
      </TrayButton>
      <Clock>
        <Lines $size={14}>
          <span>12:54 PM</span>
          <span>6/9/2024</span>
        </Lines>
      </Clock>
      <button aria-label="Do not disturb">
        <svg width="17" height="18" viewBox="0 0 17 18" fill="none" stroke="#fff" strokeWidth="1.500">
          <path d="M7.500 1A8.200 8.200 0 1 1 1 13.500Q8.500 12 7.500 1z" strokeLinejoin="round" />
        </svg>
      </button>
    </Tray>
  );
}

export default function App() {
  return (
    <Screen>
      <GlobalStyle />
      <BrowserChrome />
      <Page>
        <Main>
          <Title>Weather App</Title>
          <ForecastForm onSubmit={(e) => e.preventDefault()}>
            <CityInput aria-label="City" placeholder="Enter city name" />
            <SubmitButton type="submit">Get Weather Forecast</SubmitButton>
          </ForecastForm>
        </Main>
        <Footer>© 2024 Yomide Toby. All rights reserved.</Footer>
      </Page>
      <CaptureWidget />
      <Taskbar>
        <Weather>
          <WeatherIcon />
          <Lines $size={15}>
            <span>30°C</span>
            <Muted>Mostly cloudy</Muted>
          </Lines>
        </Weather>
        <Apps aria-label="Taskbar">
          <StartButton aria-label="Start"><WindowsIcon /></StartButton>
          <SearchBox>
            <SearchIcon />
            <SearchInput aria-label="Search" placeholder="Search" />
            <DolphinArt />
          </SearchBox>
          {apps.map((app) => (
            <AppButton key={app.name} aria-label={app.name} $active={app.active} $running={app.running}>
              {app.icon}
            </AppButton>
          ))}
        </Apps>
        <SystemTray />
      </Taskbar>
    </Screen>
  );
}
